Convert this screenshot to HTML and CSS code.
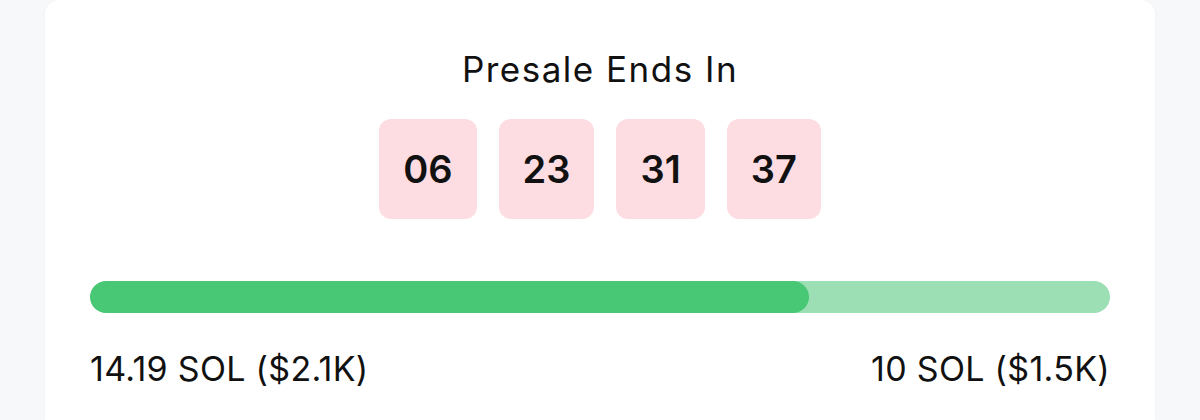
FILE: index.html
```html
<!DOCTYPE html>
<html lang="en">
<head>
  <meta charset="UTF-8">
  <meta name="viewport" content="width=device-width, initial-scale=1.0">
  <title>Presale Countdown</title>
  <link rel="stylesheet" href="styles.css">
</head>
<body>
  <div class="page">
    <!-- Presale card -->
    <section class="card">
      <h2 class="title">Presale Ends In</h2>

      <div class="countdown">
        <div class="unit">06</div>
        <div class="unit">23</div>
        <div class="unit">31</div>
        <div class="unit">37</div>
      </div>

      <div class="progress">
        <div class="progress-fill" style="width: 70.5%"></div>
      </div>

      <div class="amounts">
        <span>14.19 SOL ($2.1K)</span>
        <span>10 SOL ($1.5K)</span>
      </div>
    </section>
  </div>
</body>
</html>
```

FILE: styles.css
```css
* {
  margin: 0;
  padding: 0;
  box-sizing: border-box;
  font-family: Inter, "Noto Sans", Arial, sans-serif;
}

body {
  background-color: #f7f8fa;
  color: #111;
}

.page {
  padding: 0 45px;
}

/* Card */
.card {
  background-color: #fff;
  border-radius: 14px 14px 0 0;
  min-height: 420px;
  padding: 49px 45px 0;
  box-shadow: 0 0 3px rgba(0, 0, 0, 0.04);
}

.title {
  text-align: center;
  font-size: 35px;
  line-height: 40px;
  font-weight: 400;
  letter-spacing: 1.5px;
}

/* Countdown */
.countdown {
  display: flex;
  justify-content: center;
  gap: 22px;
  margin-top: 30px;
}
.unit {
  height: 100px;
  padding: 0 24px;
  display: flex;
  align-items: center;
  background-color: #fddde2;
  border-radius: 12px;
  font-size: 38px;
  font-weight: 600;
}

/* Progress */
.progress {
  margin-top: 62px;
  height: 32px;
  background-color: #9ddfb4;
  border-radius: 16px;
  overflow: hidden;
}
.progress-fill {
  height: 100%;
  background-color: #48c774;
  border-radius: 16px;
}

.amounts {
  display: flex;
  justify-content: space-between;
  margin-top: 37px;
  font-size: 34px;
  line-height: 38px;
  letter-spacing: 0.3px;
}
```
